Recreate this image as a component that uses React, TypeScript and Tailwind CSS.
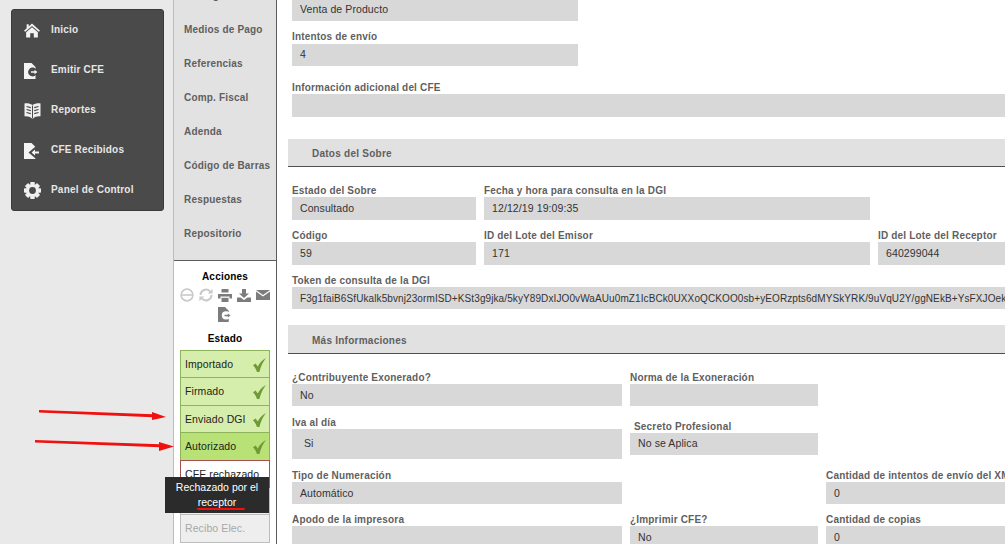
import React from "react";

const font = "font-['Liberation_Sans',Arial,sans-serif]";

function Home() {
  return (
    <svg width="16" height="15" viewBox="0 0 18 16" fill="#f4f4f4">
      <path d="M9 0 L18 8.2 L16.6 9.4 L9 2.8 L1.4 9.4 L0 8.2 L3 5.5 V1 H5.3 V3.4 Z" />
      <path d="M9 4.4 L15.6 10 V16 H11 V11 H7 V16 H2.4 V10 Z" />
    </svg>
  );
}
function FileOut({ color = "#f4f4f4", knock = "#4a4a4a", dir = "right", w = 15, h = 16 }: { color?: string; knock?: string; dir?: string; w?: number; h?: number }) {
  return (
    <svg width={w} height={h} viewBox="0 0 15 16">
      <path d="M0 0 H7.5 L11.5 4 V16 H0 Z" fill={color} />
      {dir === "right" ? (
        <>
          <circle cx="8.5" cy="9" r="4.4" fill={knock} />
          <path d="M6 7.4 H9.5 V4.6 L15 9 L9.5 13.4 V10.6 H6 Z" fill={knock} />
          <path d="M7 8.2 H10.5 V6.8 L13.4 9 L10.5 11.2 V9.8 H7 Z" fill={color} />
        </>
      ) : (
        <>
          <path d="M11.5 3.5 L4.5 9.5 L11.5 15.5 H15 V3.5 Z" fill={knock} />
          <path d="M15 8.6 H11 V6.4 L7.6 9.5 L11 12.6 V10.4 H15 Z" fill={color} />
        </>
      )}
    </svg>
  );
}
function Book() {
  return (
    <svg width="17" height="16" viewBox="0 0 17 16">
      <path d="M8.5 2 C6.5 0.6 3 0 0.5 0.4 V13.2 C3.5 13 6.5 13.6 8.5 16 C10.5 13.6 13.5 13 16.5 13.2 V0.4 C14 0 10.5 0.6 8.5 2 Z" fill="#f0f0f0" />
      <path d="M8.5 2.5 V15.5" stroke="#4a4a4a" strokeWidth="1" />
      <path d="M2.5 3.5 L6.8 4.6 M2.5 6.5 L6.8 7.6 M2.5 9.5 L6.8 10.6 M14.5 3.5 L10.2 4.6 M14.5 6.5 L10.2 7.6 M14.5 9.5 L10.2 10.6" stroke="#4a4a4a" strokeWidth="1.2" fill="none" />
    </svg>
  );
}
function Gear() {
  const teeth = [0, 45, 90, 135];
  return (
    <svg width="17" height="17" viewBox="0 0 18 18">
      {teeth.map((r) => (
        <rect key={r} x="6.6" y="0" width="4.8" height="18" rx="0.8" fill="#f0f0f0" transform={`rotate(${r} 9 9)`} />
      ))}
      <circle cx="9" cy="9" r="6.6" fill="#f0f0f0" />
      <circle cx="9" cy="9" r="3.6" fill="#4a4a4a" />
    </svg>
  );
}
function Check() {
  return (
    <svg width="13" height="14" viewBox="0 0 13 14">
      <path d="M0 7.2 L2.6 5.4 L4.8 8.6 C6.5 5 9 2 13 0 C10 3.6 7.8 8.4 6.4 14 H4 C3.2 11.4 1.8 9 0 7.2 Z" fill="#6f9a38" />
    </svg>
  );
}
function Minus() {
  return (
    <svg width="14" height="14" viewBox="0 0 14 14" fill="none" stroke="#c9c9c9" strokeWidth="1.6">
      <circle cx="7" cy="7" r="5.9" />
      <path d="M1.5 7 H12.5" />
    </svg>
  );
}
function Sync() {
  return (
    <svg width="14" height="14" viewBox="0 0 14 14" fill="none" stroke="#c9c9c9" strokeWidth="2">
      <path d="M1.5 7 A5.5 5.5 0 0 1 11 3.4" />
      <path d="M12.5 7 A5.5 5.5 0 0 1 3 10.6" />
      <path d="M8.8 5.4 H13.6 V0.8 Z M5.2 8.6 H0.4 V13.2 Z" fill="#c9c9c9" stroke="none" />
    </svg>
  );
}
function Printer() {
  return (
    <svg width="14" height="13" viewBox="0 0 14 13" fill="#7c7c7c">
      <path d="M3.5 0 H10.5 V3.5 H3.5 Z" />
      <path d="M0 5 H14 V9.5 H11.5 V7.5 H2.5 V9.5 H0 Z" />
      <path d="M3.5 8.8 H10.5 V13 H3.5 Z" />
    </svg>
  );
}
function Download() {
  return (
    <svg width="14" height="13" viewBox="0 0 14 13" fill="#7c7c7c">
      <path d="M5 0 H9 V4.5 H12 L7 9 L2 4.5 H5 Z" />
      <path d="M0 8.5 H3.5 L7 11 L10.5 8.5 H14 V13 H0 Z" />
    </svg>
  );
}
function Mail() {
  return (
    <svg width="14" height="10" viewBox="0 0 14 10" fill="#7c7c7c">
      <path d="M0 0 H14 L7 5 Z" />
      <path d="M0 1.6 L7 6.6 L14 1.6 V10 H0 Z" />
    </svg>
  );
}

function Field({ w, h = "h-[23px]", children, x = "pl-2", size = "text-[10.5px] tracking-[0.1px]" }: { w: string; h?: string; children?: React.ReactNode; x?: string; size?: string }) {
  return (
    <div className={`${w} ${h} ${x} ${size} bg-[#d8d8d8] shrink-0 flex items-center text-[#333] whitespace-nowrap overflow-hidden`}>
      {children}
    </div>
  );
}
function Label({ children, className = "" }: { children: React.ReactNode; className?: string }) {
  return (
    <div className={`h-[14px] shrink-0 leading-[16px] text-[10px] font-bold text-[#5f5f5f] tracking-[0.18px] whitespace-nowrap ${className}`}>
      {children}
    </div>
  );
}
function Section({ title, className }: { title: string; className: string }) {
  return (
    <div className={`ml-[-4px] shrink-0 bg-[#e1e1e1] border-b border-[#4f4f4f] flex items-center pl-6 pt-[2px] text-[10px] font-bold text-[#5f5f5f] tracking-[0.25px] ${className}`}>
      {title}
    </div>
  );
}

const menu = [
  { t: "Inicio", i: <Home /> },
  { t: "Emitir CFE", i: <FileOut /> },
  { t: "Reportes", i: <Book /> },
  { t: "CFE Recibidos", i: <FileOut dir="left" /> },
  { t: "Panel de Control", i: <Gear /> },
];
const tabs = ["Recargos", "Medios de Pago", "Referencias", "Comp. Fiscal", "Adenda", "Código de Barras", "Respuestas", "Repositorio"];

function Status({ t, kind, h }: { t: string; kind: "ok" | "auth" | "rej" | "off"; h: string }) {
  const cls = {
    ok: "bg-[#d6eeab] border-[#8fb35a] text-[#222]",
    auth: "bg-[#b8e275] border-[#8fb35a] text-[#222]",
    rej: "bg-white border-[#a8504f] text-[#222]",
    off: "bg-[#eeeeee] border-[#bdbdbd] text-[#a8a8a8]",
  }[kind];
  return (
    <div className={`${h} -mb-px border flex items-center justify-between pl-1 pr-[3px] text-[10.5px] tracking-[0.1px] whitespace-nowrap ${cls}`}>
      <span>{t}</span>
      {(kind === "ok" || kind === "auth") && <Check />}
    </div>
  );
}

export default function App() {
  return (
    <div className={`relative w-[1005px] h-[544px] overflow-hidden flex bg-white ${font}`}>
      <aside className="w-[173px] shrink-0 bg-[#e9e9e9] pt-[9px] pl-[11px]">
        <nav className="w-[153px] h-[202px] bg-[#4a4a4a] border border-[#3a3a3a] rounded-[3px]">
          {menu.map((m) => (
            <div key={m.t} className="h-[40px] flex items-center pl-[12px]">
              <span className="w-[27px] flex justify-start items-center pt-[1px]">{m.i}</span>
              <span className="text-[10px] font-bold text-[#e6e6e6] tracking-[0.2px] pb-[1px]">{m.t}</span>
            </div>
          ))}
        </nav>
      </aside>

      <div className="w-[104px] shrink-0 border-l border-[#bdbdbd] border-r border-r-[#5c5c5c] flex flex-col">
        <div className="h-[261px] shrink-0 bg-[#e2e2e2] border-b border-[#5c5c5c] overflow-hidden">
          <div className="-mt-[22px] pl-[10px]">
            {tabs.map((t) => (
              <div key={t} className="h-[34px] flex items-center text-[10px] font-bold text-[#5f5f5f] tracking-[0.18px] whitespace-nowrap">
                {t}
              </div>
            ))}
          </div>
        </div>
        <div className="flex-1 bg-white px-[6px] flex flex-col items-stretch">
          <div className="mt-[8px] h-[14px] leading-[16px] text-center text-[10px] font-bold text-black tracking-[0.2px]">Acciones</div>
          <div className="mt-[5px] flex justify-center items-center gap-[5px] h-[14px]">
            <Minus /><Sync /><Printer /><Download /><Mail />
          </div>
          <div className="mt-[5px] flex justify-center h-[15px]">
            <FileOut color="#7c7c7c" knock="#ffffff" w={14} h={15} />
          </div>
          <div className="mt-[9px] h-[14px] leading-[16px] text-center text-[10px] font-bold text-black tracking-[0.2px]">Estado</div>
          <div className="mt-[5px] w-[90px]">
            <Status t="Importado" kind="ok" h="h-[28px] pt-px" />
            <Status t="Firmado" kind="ok" h="h-[29px]" />
            <Status t="Enviado DGI" kind="ok" h="h-[28px] pt-px" />
            <Status t="Autorizado" kind="auth" h="h-[29px]" />
            <Status t="CFE rechazado" kind="rej" h="h-[29px]" />
            <Status t="" kind="off" h="h-[27px]" />
            <Status t="Recibo Elec." kind="off" h="h-[29px]" />
          </div>
        </div>
      </div>

      <main className="flex-1 min-w-0 pl-[15px] flex flex-col overflow-hidden">
        <Field w="w-[286px]" h="h-[21px] pb-px">Venta de Producto</Field>
        <Label className="mt-[8px] mb-[1px]">Intentos de envío</Label>
        <Field w="w-[286px]" h="h-[22px] pb-px">4</Field>
        <Label className="mt-[14px]">Información adicional del CFE</Label>
        <Field w="w-[713px]" />
        <Section title="Datos del Sobre" className="mt-[22px] w-[717px] h-[28px]" />
        <div className="mt-[16px] flex gap-2 shrink-0">
          <div><Label>Estado del Sobre</Label><Field w="w-[184px]">Consultado</Field></div>
          <div><Label>Fecha y hora para consulta en la DGI</Label><Field w="w-[386px]">12/12/19 19:09:35</Field></div>
        </div>
        <div className="mt-[8px] flex gap-2 shrink-0">
          <div><Label>Código</Label><Field w="w-[184px]">59</Field></div>
          <div><Label>ID del Lote del Emisor</Label><Field w="w-[386px]">171</Field></div>
          <div><Label>ID del Lote del Receptor</Label><Field w="w-[140px]">640299044</Field></div>
        </div>
        <Label className="mt-[8px]">Token de consulta de la DGI</Label>
        <Field w="w-[713px]" h="h-[22px]" size="text-[10px] tracking-[0.1px]">F3g1faiB6SfUkalk5bvnj23ormISD+KSt3g9jka/5kyY89DxIJO0vWaAUu0mZ1IcBCk0UXXoQCKOO0sb+yEORzpts6dMYSkYRK/9uVqU2Y/ggNEkB+YsFXJOekT3</Field>
        <Section title="Más Informaciones" className="mt-[16px] w-[717px] h-[29px]" />
        <div className="mt-[16px] flex gap-2 shrink-0">
          <div><Label>¿Contribuyente Exonerado?</Label><Field w="w-[330px]" h="h-[22px] pt-[2px]">No</Field></div>
          <div><Label>Norma de la Exoneración</Label><Field w="w-[188px]" h="h-[22px]" /></div>
        </div>
        <div className="mt-[9px] flex gap-2 shrink-0">
          <div><Label>Iva al día</Label><Field w="w-[330px]" h="h-[30px] pb-px" x="pl-3">Si</Field></div>
          <div>
            <Label className="pl-1 mt-[4px]">Secreto Profesional</Label>
            <Field w="w-[188px]" h="h-[22px] pb-px">No se Aplica</Field>
          </div>
        </div>
        <div className="mt-[9px] flex shrink-0">
          <div className="w-[338px] shrink-0"><Label>Tipo de Numeración</Label><Field w="w-[330px]" h="h-[22px] pt-[2px]">Automático</Field></div>
          <div className="w-[196px] shrink-0" />
          <div><Label>Cantidad de intentos de envío del XML</Label><Field w="w-[190px]" h="h-[22px] pt-[2px]">0</Field></div>
        </div>
        <div className="mt-[8px] flex gap-2 shrink-0">
          <div><Label>Apodo de la impresora</Label><Field w="w-[330px]" h="h-[22px]" /></div>
          <div><Label>¿Imprimir CFE?</Label><Field w="w-[188px]" h="h-[22px] pt-[2px]">No</Field></div>
          <div><Label>Cantidad de copias</Label><Field w="w-[190px]" h="h-[22px] pt-[2px]">0</Field></div>
        </div>
      </main>

      {/* annotations drawn over the screenshot */}
      <svg className="absolute left-0 top-0 pointer-events-none" width="180" height="544">
        <path d="M39 410 L153 414.2 L153 417.2 L39 412.6 Z" fill="#f01010" />
        <path d="M152 412 L166 417 L152 420 Z" fill="#f01010" />
        <path d="M35 440 L160 444.2 L160 447.2 L35 442.6 Z" fill="#f01010" />
        <path d="M159 442 L174 446.5 L159 451 Z" fill="#f01010" />
      </svg>
      <div className="absolute left-[165px] top-[477px] w-[104px] h-[36px] bg-[#2b2b2b] text-white text-[10.5px] leading-[15px] text-center pt-[3px]">
        Rechazado por el
        <br />
        receptor
        <div className="absolute left-[32px] top-[31px] w-[48px] h-[2px] rounded-full bg-[#f01010]" />
      </div>
    </div>
  );
}
